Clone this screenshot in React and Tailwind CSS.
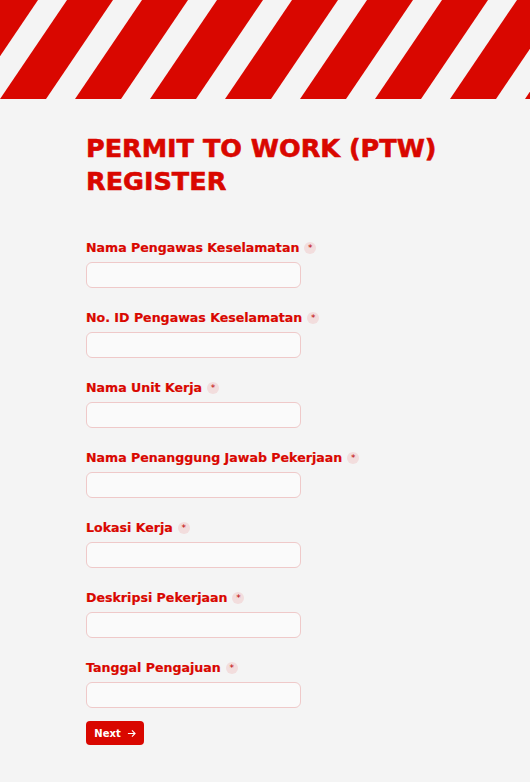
import React from "react";

const fields = [
  "Nama Pengawas Keselamatan",
  "No. ID Pengawas Keselamatan",
  "Nama Unit Kerja",
  "Nama Penanggung Jawab Pekerjaan",
  "Lokasi Kerja",
  "Deskripsi Pekerjaan",
  "Tanggal Pengajuan",
];

function Stripes() {
  const polys = [];
  for (let k = 0; k < 9; k++) {
    const x0 = -75 + 75 * k;
    polys.push(
      <polygon
        key={k}
        points={`${x0 + 67},0 ${x0 + 113},0 ${x0 + 46},99 ${x0},99`}
        fill="#d90700"
      />
    );
  }
  return (
    <svg width="530" height="99" viewBox="0 0 530 99" className="block">
      {polys}
    </svg>
  );
}

export default function App() {
  return (
    <div
      className="min-h-[782px] w-[530px] bg-[#f4f4f4]"
      style={{ fontFamily: '"DejaVu Sans", sans-serif' }}
    >
      <Stripes />
      <div className="pl-[86px] pt-[33px]">
        <h1 className="text-[25.5px] font-bold leading-[33px] text-[#d90700] [-webkit-text-stroke:0.6px_#d90700]">
          PERMIT TO WORK (PTW)
          <br />
          REGISTER
        </h1>
        <div className="mt-[40px] flex flex-col gap-[20px]">
          {fields.map((f) => (
            <div key={f} className="flex flex-col">
              <div className="flex items-center gap-[5px] h-[20px]">
                <span className="text-[12.6px] font-bold text-[#d90700] [-webkit-text-stroke:0.2px_#d90700]">{f}</span>
                <span className="flex h-[12px] w-[12px] items-center justify-center rounded-full bg-[#f2dddd] text-[9px] leading-none text-[#c00000]">
                  *
                </span>
              </div>
              <input
                className="mt-[4px] h-[26px] w-[215px] rounded-[6px] border border-[#efc9c9] bg-[#fafafa] outline-none"
              />
            </div>
          ))}
        </div>
        <button className="mt-[13px] flex h-[24px] w-[58px] items-center justify-center gap-[6px] rounded-[4px] bg-[#d90700] text-[10px] font-bold text-white">
          Next
          <svg width="9" height="9" viewBox="0 0 10 10" fill="none" stroke="white" strokeWidth="1.2">
            <path d="M1 5h8M5.5 1.5L9 5L5.5 8.5" />
          </svg>
        </button>
      </div>
    </div>
  );
}
